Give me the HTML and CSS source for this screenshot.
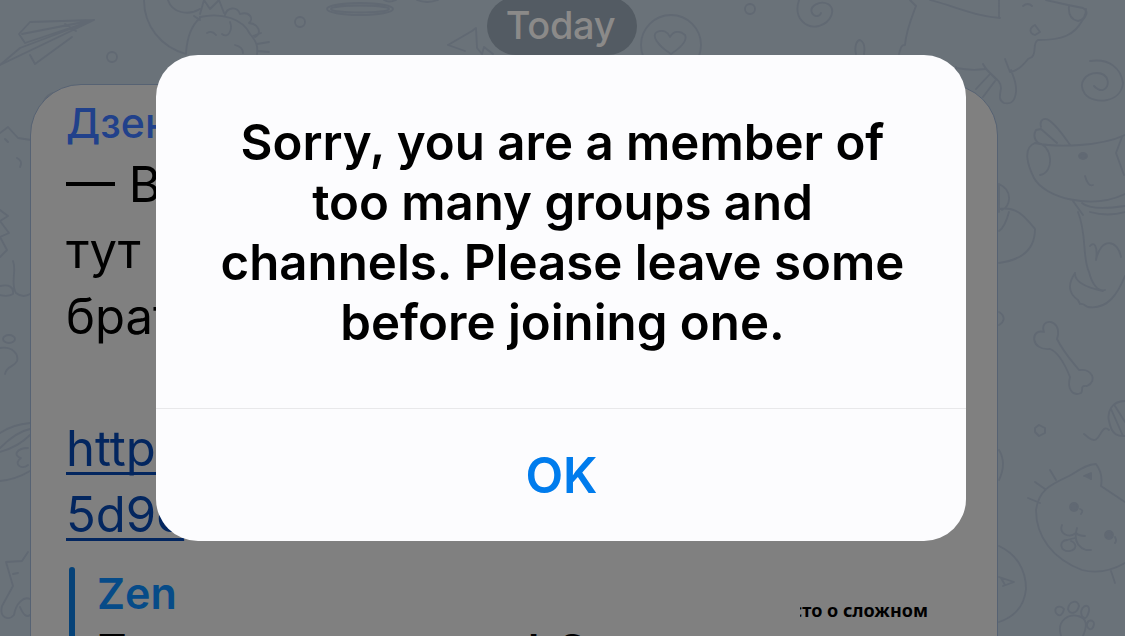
FILE: index.html
```
<!DOCTYPE html>
<html lang="en">
<head>
<meta charset="utf-8">
<title>Chat</title>
<link rel="stylesheet" href="styles.css">
</head>
<body>
<main class="chat">
  <svg class="wallpaper" viewBox="0 0 1125 636" aria-hidden="true">
    <!-- paper plane, cats and shapes on the left -->
    <path d="M94 20 30 22 19 34 25 43 94 20 22 34M94 20 20 48 0 65M94 20 0 65M30 55 35 64 72 37M65 24 76 31M144 0c0 26 17 47 42 54M168 0c4 13 20 16 32 9M186 53c1-15 6-28 14-35M194 16l6 4"/>
    <circle cx="112" cy="57" r="5"/>
    <path d="M0 133 8 127 18 138 31 140M5 139l3 3M17 158q6 3 3 9M0 210l8 6-8 5 9 12-9 4 7 13-7 7M13 261c4 10-3 23 3 32 5 4 9 4 14 1M0 286c9-2 14 1 13 8q-5 3-13 1M43 103c2-6 7-10 12-10"/>
    <ellipse cx="9" cy="339" rx="6" ry="4"/>
    <path d="M0 348c12-2 19 6 17 13-3 7-10 4-12 13M0 433c9-6 18-9 30-10M0 448c10-10 20-17 30-19M0 481c10-1 20-4 30-10M0 452q18-5 30-17M28 448c-12 0-15 8-7 10-8 5 0 13 7 7M28 552l-6 9-16 1 7 24-11 20c-3 12 7 15 12 9 2-12 10-19 16-16M13 574l5-1M20 607q5 12 10 8"/>
    <!-- sheep, halo and fish along the top edge -->
    <path d="M200 17c22-5 43 2 50 17 7 8 8 13 7 20M200 14l4-14 6 9 9-9 5 13M225 15c2-8 12-9 15-1 10-3 14 5 9 9 10 1 13 10 6 14M207 33q5-3 9 2M222 34c6 5 11-4 8-12M235 45q8 2 8 8M253 36l8-3M257 44l12-2M257 51l12 1M384 0q5 3 12 0M417 0q10 4 21 0M448 45l24-14 4-3 1 20 5 6M448 45l17 6M482 54l2-7 9 7"/>
    <ellipse cx="360" cy="9" rx="33" ry="6"/><ellipse cx="360" cy="9" rx="29" ry="3.5"/>
    <circle cx="300" cy="22" r="5"/><circle cx="671" cy="45" r="30"/><circle cx="750" cy="9" r="5"/>
    <path d="M671 54c-14-9-20-19-14-22 6-3 11 0 13 5 3-6 10-7 15-2 3 6-5 13-14 19zM799 0c-6 18 7 29 20 26 13-4 17-17 9-22-8-4-19 2-16 9 3 5 8 3 9 0M856 54c-2-8 1-14 4-14 4 2 5 8 4 14M899 54c2-7 2-9 6-9 1-14 6-26 11-39l-6-6M930 0c24 6 43 16 70 18M999 17V0"/>
    <!-- long-nosed dog -->
    <path d="M1046 0l22 5 15 3c7 4 2 9-1 13-8 14-19 19-44 19-6 3-1 12-6 17l-4 2c-6 8-11 12-18 13l-5-13M1069 5c-1 10 3 15 9 16 6-1 8-7 8-12M1023 6q5-4 9 0M1035 25c-6 3-6 8 0 10l5-3zM956 68q16 3 29 1M983 64c6 12 18 14 18 24-1 7-3 12 3 15 8 2 11-3 12-11 1-10-4-18-5-22M976 89l14-15M983 97l12-16M956 67v18M997 80l-12-12"/>
    <!-- spiral and peeking puppy -->
    <path d="M1090 61c20-3 31 8 33 22-2 20-29 22-38 11-8-11 1-21 12-21 12 0 14 14 6 17-4 1-7-2-9-4M1038 143q-6-6-2-13l5-1 16 14M1041 127c-2-8 4-10 9-6 9 7 15 17 20 24M1035 143c24 5 66 3 90-8M1035 143c-13 5-7 23-1 35 11 20 57 32 91 16M1036 143c17 0 19 30 4 32M1122 137l-6 16 8 22M1085 176q3 11 8 9M1073 201l10 14M1082 203q9 8 43 3"/>
    <path d="M999 184c15 7 11 23 3 26M999 209c18-3 26 8 36 20 0 20-13 31-36 34M999 184v28M1009 212q-4 15-10 19M1078 212c9 22 4 45 11 60 3 12 9 20 16 18M1090 246c4-5 8 0 6 14 5-24 22-20 25-3M1075 273c-8 12-6 21 3 27l2 4c4-1 5 2 8 3 20 3 30-14 37-31M1075 273q-1 12 28 18M1090 212q18 5 35 0"/>
    <path d="M1044 332c-5-14 16-14 14 3l-1 4c7 14 14 21 22 31 13-2 19 11 8 16-8-1-3 4-6 7-9 4-14-5-11-16-6-15-12-25-20-28-20 2-20-21-6-17z"/>
    <path d="M999 312c8 5 4 11 0 13M1125 401c-14 0-18 12-16 20 3 16 11 15 16 15M1111 409l12 27M1115 406l10 16M1109 430c-9-8-8 17-20 8l-5-4M1035 428l4-3 6 3v5l-6 3-4-4zM999 450q8 13 0 30"/>
    <!-- winking cat -->
    <path d="M1125 502l-24-16c2-11-2-18-5-22-10 0-18 7-27 12-17 8-30 13-33 34 0 27 17 49 46 60 16 4 29 1 43-7M1028 498l12 5M1035 482l10 7M1050 470l6 10M1084 476l7-3v6M1062 525c-3 8 6 14 14 8 3 3 6 3 9 3M1077 528q-5 17 9 22h5M1067 540c-8 0-8 12 3 11 8-2 6-8 1-10M1067 540l8-2M1111 571l4 12M1080 509q4 1 1 5M1115 537q2 4 0 6M999 546c17 8 27 23 27 43-2 20-15 29-27 33M999 577l15 5-11 4M1001 578l4 7"/>
    <circle class="mark" cx="1074" cy="507" r="4"/><circle class="mark" cx="1109" cy="535" r="4"/><path class="mark" d="m1085 476 6-2v5z"/><ellipse class="mark" cx="1083" cy="156" rx="4" ry="3"/>
    <!-- paw -->
    <path d="M1061 636c-5-17 9-22 17-20 10 2 9 11 5 20M1056 613c-3-7 5-8 8-4-1 5-4 9-8 4zM1068 609c1-8 10-10 11-3-2 8-9 9-11 3zM1082 616c-4-9 8-15 7-5-2 7-4 9-7 5zM1087 626c0-8 7-6 7-2-1 6-5 7-7 2z"/>
  </svg>

  <div class="date">Today</div>

  <article class="message">
    <div class="sender">Дзен</div>
    <div class="body">— В<br>тут<br>брат<br><br><a class="link">https</a><br><a class="link">5d9c</a></div>
    <section class="preview">
      <div class="preview-text">
        <div class="site">Zen</div>
        <div class="headline"><span class="first">Т</span><span class="mid">l</span><span>С</span></div>
      </div>
      <div class="thumb"><span>сто о сложном</span></div>
    </section>
  </article>

  <section class="alert" role="alertdialog">
    <div class="alert-message"><span>Sorry, you are a member of</span><span>too many groups and</span><span>channels. Please leave some</span><span>before joining one.</span></div>
    <button class="ok">OK</button>
  </section>
</main>
</body>
</html>
```
FILE: styles.css
```
* { box-sizing: border-box; }
body { margin: 0; }
.chat {
  position: relative;
  width: 1125px;
  height: 636px;
  overflow: hidden;
  background: #6a7279;
  font-family: Inter, "Noto Sans", sans-serif;
  display: flex;
  flex-direction: column;
}
.wallpaper {
  position: absolute;
  inset: 0;
  width: 1125px;
  height: 636px;
  fill: none;
  stroke: #616973;
  stroke-width: 1.8;
  stroke-linecap: round;
  stroke-linejoin: round;
}
.mark { fill: #616973; }
.date {
  position: relative;
  align-self: flex-start;
  flex: none;
  margin: -3px 0 0 487px;
  width: 150px;
  height: 58px;
  padding-right: 3px;
  border-radius: 29px;
  background: #535b63;
  color: #8b8a89;
  font-size: 38px;
  font-weight: 500;
  letter-spacing: -0.3px;
  line-height: 57px;
  text-align: center;
}
.message {
  position: relative;
  flex: none;
  margin: 29px 0 0 30px;
  width: 968px;
  height: 620px;
  padding: 16px 35px;
  border: 1px solid #566273;
  border-radius: 51px;
  background: #808080;
  overflow: hidden;
}
.sender {
  height: 51px;
  line-height: 45px;
  font-size: 41px;
  font-weight: 500;
  color: #21418b;
}
.body {
  font-size: 49px;
  line-height: 66px;
  height: 414px;
  color: #000;
  white-space: nowrap;
}
.link {
  color: #03265f;
  text-decoration: underline;
  text-decoration-thickness: 3px;
  text-underline-offset: 6px;
  text-decoration-skip-ink: none;
}
.preview {
  display: flex;
  height: 150px;
  position: relative;
  padding-left: 31px;
}
.preview::before {
  content: "";
  position: absolute;
  left: 3px;
  top: 1px;
  width: 6px;
  height: 150px;
  border-radius: 3px;
  background: #064278;
}
.preview-text { width: 703px; }
.site {
  color: #064b88;
  font-size: 43px;
  line-height: 54px;
  font-weight: 600;
}
.headline {
  display: flex;
  padding: 2px 0 0 1px;
  font-size: 43px;
  line-height: 54px;
  font-weight: 600;
}
.first { width: 430px; }
.mid { width: 28px; }
.thumb {
  width: 128px;
  padding-top: 31px;
  overflow: hidden;
  display: flex;
  justify-content: flex-end;
  white-space: nowrap;
  font: 700 18px/27px "Noto Sans", sans-serif;
}
.alert {
  position: absolute;
  left: 156px;
  top: 55px;
  width: 810px;
  height: 486px;
  border-radius: 42px;
  background: #fcfcfe;
  overflow: hidden;
  display: flex;
  flex-direction: column;
}
.alert-message {
  height: 354px;
  padding: 57px 0 0 3px;
  border-bottom: 1px solid #e8e8ea;
  display: flex;
  flex-direction: column;
  align-items: center;
  font-size: 49.2px;
  line-height: 60px;
  font-weight: 600;
  color: #000;
  white-space: nowrap;
}
.ok {
  flex: 1;
  border: 0;
  padding: 2px 0 0 1px;
  background: none;
  color: #007ced;
  font: 600 49px/60px Inter, sans-serif;
}
```
